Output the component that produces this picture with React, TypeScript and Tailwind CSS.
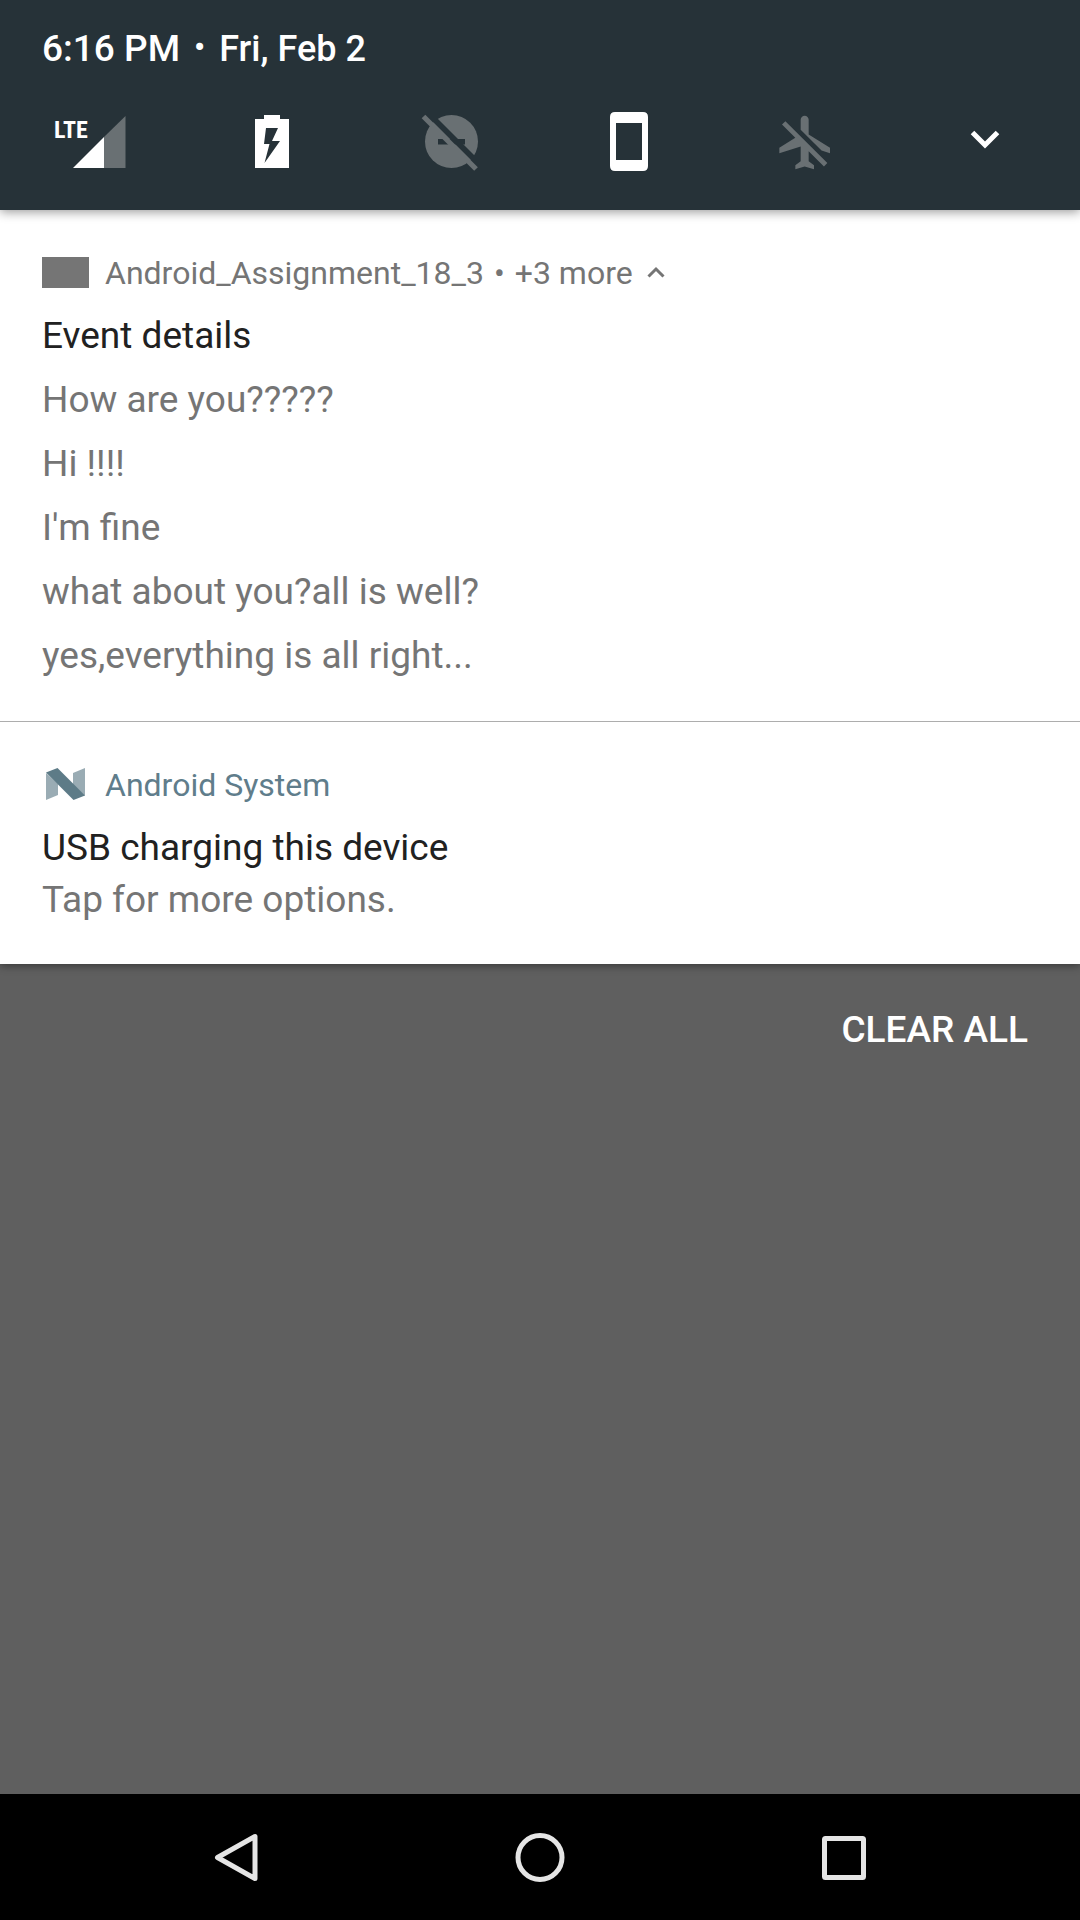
import type { ReactNode } from "react";

function Glyph({ children }: { children: ReactNode }) {
  return (
    <svg viewBox="0 0 80 80" className="block size-20" aria-hidden="true">
      {children}
    </svg>
  );
}

const tiles: { label: string; icon: ReactNode }[] = [
  {
    label: "Mobile network",
    icon: (
      <>
        <path d="M71.500 15V67H50V36z" fill="#697073" />
        <path d="M50 36V67H19z" fill="#fff" />
        <text
          x="0"
          y="37"
          fill="#fff"
          className="font-['Roboto_Condensed','Liberation_Sans_Narrow','Open_Sans_Condensed','DejaVu_Sans_Condensed',Roboto,sans-serif] text-[24px] font-bold"
        >
          LTE
        </text>
      </>
    ),
  },
  {
    label: "Battery",
    icon: (
      <path
        fill="#fff"
        fillRule="evenodd"
        d="M32 14H48V18H57V67H23V18H32zM34 27L32 43H37.500L32.500 62L48 40H40L46 27z"
      />
    ),
  },
  {
    label: "Do not disturb",
    icon: (
      <>
        <circle cx="40.500" cy="40.500" r="26.500" fill="#697073" />
        <path d="M27 38H54V43.500H27z" fill="#263238" />
        <path d="M16 11L72 67" stroke="#263238" strokeWidth="5.700" />
        <path d="M12.500 15.500L65 68" stroke="#697073" strokeWidth="5.200" />
      </>
    ),
  },
  {
    label: "Portrait",
    icon: (
      <path
        fill="#fff"
        fillRule="evenodd"
        d="M26 11H54Q59 11 59 16V65Q59 70 54 70H26Q21 70 21 65V16Q21 11 26 11zM27 22V59H53V22z"
      />
    ),
  },
  {
    label: "Airplane mode",
    icon: (
      <path
        transform="translate(6 9.500) scale(2.667)"
        fill="#697073"
        d="M13 9V3.500c0-.83-.67-1.500-1.500-1.500S10 2.670 10 3.500v3.680l7.830 7.830L21 16v-2l-8-5zM3 5.270l4.990 4.990L2 14v2l8-2.500V19l-2 1.500V22l3.500-1 3.500 1v-1.500L13 19v-3.730L18.730 21 20 19.730 4.270 4 3 5.270z"
      />
    ),
  },
  {
    label: "Expand",
    icon: <path d="M26.500 31.500L39 44L51.500 31.500" fill="none" stroke="#fff" strokeWidth="5" />,
  },
];

const messages = [
  "How are you?????",
  "Hi !!!!",
  "I'm fine",
  "what about you?all is well?",
  "yes,everything is all right...",
];

const navButtons: { label: string; icon: ReactNode }[] = [
  { label: "Back", icon: <path d="M59 18.500V60.500L21.500 39.500z" /> },
  { label: "Home", icon: <circle cx="40" cy="39.500" r="22" /> },
  { label: "Overview", icon: <rect x="20.500" y="20.500" width="39" height="39" rx="1" /> },
];

export default function App() {
  return (
    <div className="flex min-h-screen flex-col bg-[#5f5f5f] font-[Roboto,sans-serif] text-[37px]">
      <header className="relative bg-[#263238] pb-[29px] font-medium text-white shadow-[0_2px_10px_rgba(0,0,0,0.4)]">
        <p className="flex h-[101px] items-start gap-[14px] px-[42px] pt-[23px] leading-[52px]">
          <span>6:16 PM</span>
          <span className="text-[32px] leading-12">•</span>
          <span className="text-[36px]">Fri, Feb 2</span>
        </p>
        <div className="flex justify-between px-[54px]">
          {tiles.map((t) => (
            <button key={t.label} type="button" aria-label={t.label}>
              <Glyph>{t.icon}</Glyph>
            </button>
          ))}
        </div>
      </header>

      <main className="flex-1">
        <div className="bg-white shadow-[0_2px_8px_rgba(0,0,0,0.4)]">
          <article className="border-b border-[#adadad] px-[42px] pt-10 pb-[33px] text-[#757575]">
            <button type="button" className="mb-[10px] flex h-11 items-center text-[32px]">
              <span className="mr-4 h-[31px] w-[47px] bg-[#757575]" />
              <span className="flex gap-[10px] pt-[2px]">
                <span>Android_Assignment_18_3</span>
                <span>•</span>
                <span>+3 more</span>
              </span>
              <svg viewBox="0 0 18 12" className="ml-[14px] h-3 w-[18px]" aria-hidden="true">
                <path d="M1.500 10.500L9 3L16.500 10.500" fill="none" stroke="#757575" strokeWidth="3" />
              </svg>
            </button>
            <h2 className="leading-[64px] text-[#212121]">Event details</h2>
            {messages.map((m) => (
              <p key={m} className="leading-[64px]">
                {m}
              </p>
            ))}
          </article>

          <article className="px-[42px] pt-10 pb-[38px]">
            <div className="mb-4 flex h-11 items-center text-[32px] text-[#607d8b]">
              <svg viewBox="0 0 47 34" className="mr-4 h-[34px] w-[47px]" aria-hidden="true">
                <path d="M4 6L16 17V28L4 33z" fill="#9aacb4" />
                <path d="M31 6L43 1V29L31 18z" fill="#9aacb4" />
                <path d="M4 5.500L15.500 1L43 28.500L31.500 33z" fill="#5d7b87" />
              </svg>
              <span className="pt-[2px]">Android System</span>
            </div>
            <h2 className="leading-[52px] text-[#212121]">USB charging this device</h2>
            <p className="leading-[52px] text-[#757575]">Tap for more options.</p>
          </article>
        </div>

        <div className="flex justify-end px-[52px] pt-10">
          <button type="button" className="leading-[52px] font-medium text-white">
            CLEAR ALL
          </button>
        </div>
      </main>

      <nav className="flex justify-between bg-black px-[196px] pt-6 pb-[22px]">
        {navButtons.map((b) => (
          <button key={b.label} type="button" aria-label={b.label}>
            <Glyph>
              <g fill="none" stroke="#e5e5e5" strokeWidth="5" strokeLinejoin="round">
                {b.icon}
              </g>
            </Glyph>
          </button>
        ))}
      </nav>
    </div>
  );
}
